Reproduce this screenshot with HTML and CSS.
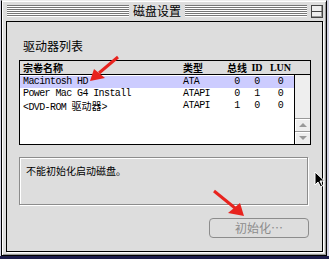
FILE: index.html
```html
<!DOCTYPE html>
<html lang="zh-CN">
<head>
    <meta charset="UTF-8">
    <title>磁盘设置</title>
    <link rel="stylesheet" href="styles.css">
</head>
<body>
    <div class="window">
        <div class="titlebar">
            <div class="stripes"></div>
            <div class="title">磁盘设置</div>
            <div class="stripes"></div>
            <div class="collapse-box"><span></span></div>
        </div>

        <div class="content">
            <div class="section-label">驱动器列表</div>

            <div class="drive-list">
                <div class="list-row list-header">
                    <span>宗卷名称</span>
                    <span>类型</span>
                    <span class="num">总线</span>
                    <span class="num latin">ID</span>
                    <span class="num latin">LUN</span>
                </div>
                <div class="list-body">
                    <div class="rows">
                        <div class="list-row selected">
                            <span>Macintosh HD</span>
                            <span>ATA</span>
                            <span class="num">0</span>
                            <span class="num">0</span>
                            <span class="num">0</span>
                        </div>
                        <div class="list-row">
                            <span>Power Mac G4 Install</span>
                            <span>ATAPI</span>
                            <span class="num">0</span>
                            <span class="num">1</span>
                            <span class="num">0</span>
                        </div>
                        <div class="list-row">
                            <span>&lt;DVD-ROM <span class="cjk">驱动器</span>&gt;</span>
                            <span>ATAPI</span>
                            <span class="num">1</span>
                            <span class="num">0</span>
                            <span class="num">0</span>
                        </div>
                    </div>
                    <div class="scrollbar">
                        <div class="track"></div>
                        <div class="arrow-btn"><span class="arrow up"></span></div>
                        <div class="arrow-btn"><span class="arrow down"></span></div>
                    </div>
                </div>
            </div>

            <div class="message-box">不能初始化启动磁盘。</div>

            <div class="button-row">
                <button class="init-button" disabled>初始化…</button>
            </div>
        </div>
    </div>

    <!-- annotation arrows drawn over the screenshot -->
    <svg class="annotations" width="329" height="259" viewBox="0 0 329 259">
        <line x1="118" y1="57" x2="99" y2="73" stroke="#e8231e" stroke-width="3"/>
        <polygon points="90,81 94,69 105,78" fill="#e8231e"/>
        <line x1="214" y1="191" x2="235" y2="208" stroke="#e8231e" stroke-width="3"/>
        <polygon points="244,216 228,213 240,203" fill="#e8231e"/>
    </svg>

    <svg class="cursor" width="12" height="17" viewBox="0 0 12 17">
        <path d="M1 1 L1 14 L4 11 L6.5 16 L8.5 15 L6 10 L10.5 10 Z" fill="#000" stroke="#fff" stroke-width="1"/>
    </svg>
</body>
</html>
```

FILE: styles.css
```css
body {
    margin: 0;
    width: 329px;
    height: 259px;
    overflow: hidden;
    position: relative;
    background: linear-gradient(to bottom, #d4d4e4 0 256px, #1c1c4a 256px);
    font-family: "Noto Sans CJK SC", sans-serif;
    color: #000;
}
.window {
    box-sizing: border-box;
    width: 326px;
    height: 256px;
    margin-left: 1px;
    border: 1px solid #000;
    border-top-color: #eeeeee;
    background-color: #dddddd;
    box-shadow: inset 1px 1px 0 #fff, inset -1px -1px 0 #999;
    padding: 0 3px 3px 4px;
}
.titlebar {
    display: flex;
    align-items: center;
    height: 20px;
    padding-left: 1px;
}
.stripes {
    flex: 1;
    height: 12px;
    background: repeating-linear-gradient(to bottom, #777 0 1px, #fff 1px 2px);
}
.title {
    font-size: 12px;
    line-height: 14px;
    padding: 0 4px;
}
.collapse-box {
    box-sizing: border-box;
    width: 12px;
    height: 13px;
    margin-left: 4px;
    border: 1px solid #444;
    background-color: #eee;
    box-shadow: inset -1px -1px 0 #999;
    display: flex;
    align-items: center;
}
.collapse-box span {
    display: block;
    width: 100%;
    height: 1px;
    background-color: #444;
}
.content {
    box-sizing: border-box;
    height: 231px;
    border: 1px solid #000;
    box-shadow: 1px 1px 0 #fff;
    padding: 17px 11px 13px 12px;
}
.section-label {
    font-size: 12px;
    line-height: 14px;
    margin-left: 4px;
    margin-bottom: 7px;
}
.drive-list {
    box-sizing: border-box;
    height: 85px;
    border: 1px solid #000;
    background-color: #fff;
    display: flex;
    flex-direction: column;
}
.list-row {
    display: grid;
    grid-template-columns: 160px 44px 20px 20px 27px;
    padding-left: 3px;
    height: 12px;
    font-family: "Liberation Mono", monospace;
    font-size: 10px;
    letter-spacing: -0.6px;
    line-height: 12px;
    white-space: nowrap;
}
.list-row .num {
    text-align: center;
}
.list-row .cjk {
    font-family: "Noto Sans CJK SC", sans-serif;
    font-size: 10px;
    letter-spacing: 0;
}
.list-header {
    height: 13px;
    line-height: 13px;
    background-color: #dddddd;
    border-bottom: 1px solid #000;
    font-family: "Noto Sans CJK SC", sans-serif;
    font-weight: bold;
    letter-spacing: 0;
}
.list-header .latin {
    font-family: "Liberation Serif", serif;
    font-size: 10px;
}
.list-body {
    flex: 1;
    display: flex;
}
.rows {
    flex: 1;
    padding-top: 1px;
}
.selected {
    background-color: #ccccff;
}
.scrollbar {
    width: 15px;
    border-left: 1px solid #000;
    background-color: #eeeeee;
    display: flex;
    flex-direction: column;
}
.track {
    flex: 1;
}
.arrow-btn {
    height: 12px;
    border-top: 1px solid #999;
    box-shadow: inset 1px 1px 0 #fff;
    display: flex;
    align-items: center;
    justify-content: center;
}
.arrow {
    width: 0;
    height: 0;
    border-left: 4px solid transparent;
    border-right: 4px solid transparent;
}
.arrow.up {
    border-bottom: 4px solid #999;
}
.arrow.down {
    border-top: 4px solid #999;
}
.message-box {
    box-sizing: border-box;
    height: 48px;
    margin-top: 12px;
    margin-right: 3px;
    border: 1px solid #8c8c8c;
    box-shadow: 1px 1px 0 #fff, inset 1px 1px 0 #fff;
    padding: 6px 6px;
    font-size: 10px;
    line-height: 13px;
}
.button-row {
    display: flex;
    justify-content: flex-end;
    margin-top: 13px;
    margin-right: 2px;
}
.init-button {
    box-sizing: border-box;
    width: 100px;
    height: 20px;
    border: 1px solid #8c8c8c;
    border-radius: 4px;
    background-color: #dddddd;
    color: #8c8c8c;
    font-family: "Noto Sans CJK SC", sans-serif;
    font-size: 12px;
    line-height: 16px;
    padding: 0;
}
.annotations {
    position: absolute;
    left: 0;
    top: 0;
}
.cursor {
    position: absolute;
    left: 314px;
    top: 171px;
}
```
